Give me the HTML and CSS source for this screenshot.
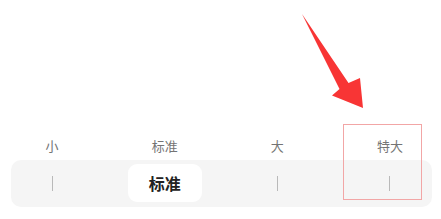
FILE: index.html
```html
<!DOCTYPE html>
<html lang="zh">
<head>
  <meta charset="UTF-8" />
  <meta name="viewport" content="width=device-width, initial-scale=1.0" />
  <title>字号</title>
  <link rel="stylesheet" href="styles.css">
</head>
<body>
  <div class="page">
    <div class="labels">
      <span class="label">小</span>
      <span class="label">标准</span>
      <span class="label">大</span>
      <span class="label">特大</span>
    </div>

    <div class="track">
      <div class="stop"><span class="tick"></span></div>
      <div class="stop"><span class="pill">标准</span></div>
      <div class="stop"><span class="tick"></span></div>
      <div class="stop"><span class="tick"></span></div>
    </div>

    <!-- markierung -->
    <div class="highlight"></div>
    <svg class="arrow" width="441" height="219" viewBox="0 0 441 219">
      <polygon points="302,14 339.5,89 332,95.5 363,108 360,78 348.5,83" fill="#f83535" />
    </svg>
  </div>
</body>
</html>
```

FILE: styles.css
```css
body {
  margin: 0;
  background: #fff;
  font-family: "Noto Sans CJK SC", "Noto Sans", sans-serif;
}

.page {
  position: relative;
  width: 441px;
  height: 219px;
  padding-top: 136px;
  box-sizing: border-box;
}

.labels,
.track {
  display: flex;
  justify-content: space-between;
}

.labels {
  height: 20px;
  padding: 0 14px 0 15px;
  margin-bottom: 4px;
}

.label {
  width: 74px;
  text-align: center;
  font-size: 13px;
  line-height: 20px;
  color: #747474;
}

.track {
  margin: 0 9px 0 11px;
  height: 47px;
  padding: 4px 5px 5px 4px;
  box-sizing: border-box;
  background-color: #f5f5f5;
  border-radius: 10px;
}

.stop {
  width: 74px;
  display: flex;
  align-items: center;
  justify-content: center;
}

.tick {
  width: 1px;
  height: 15px;
  background-color: #b9b9b9;
}

.pill {
  width: 74px;
  height: 38px;
  line-height: 38px;
  text-align: center;
  background: #fff;
  border-radius: 9px;
  font-size: 16px;
  font-weight: bold;
  color: #222;
}

.highlight {
  position: absolute;
  left: 343px;
  top: 124px;
  width: 79px;
  height: 76px;
  border: 1px solid #f2a6a6;
  box-sizing: border-box;
}

.arrow {
  position: absolute;
  left: 0;
  top: 0;
}
```
